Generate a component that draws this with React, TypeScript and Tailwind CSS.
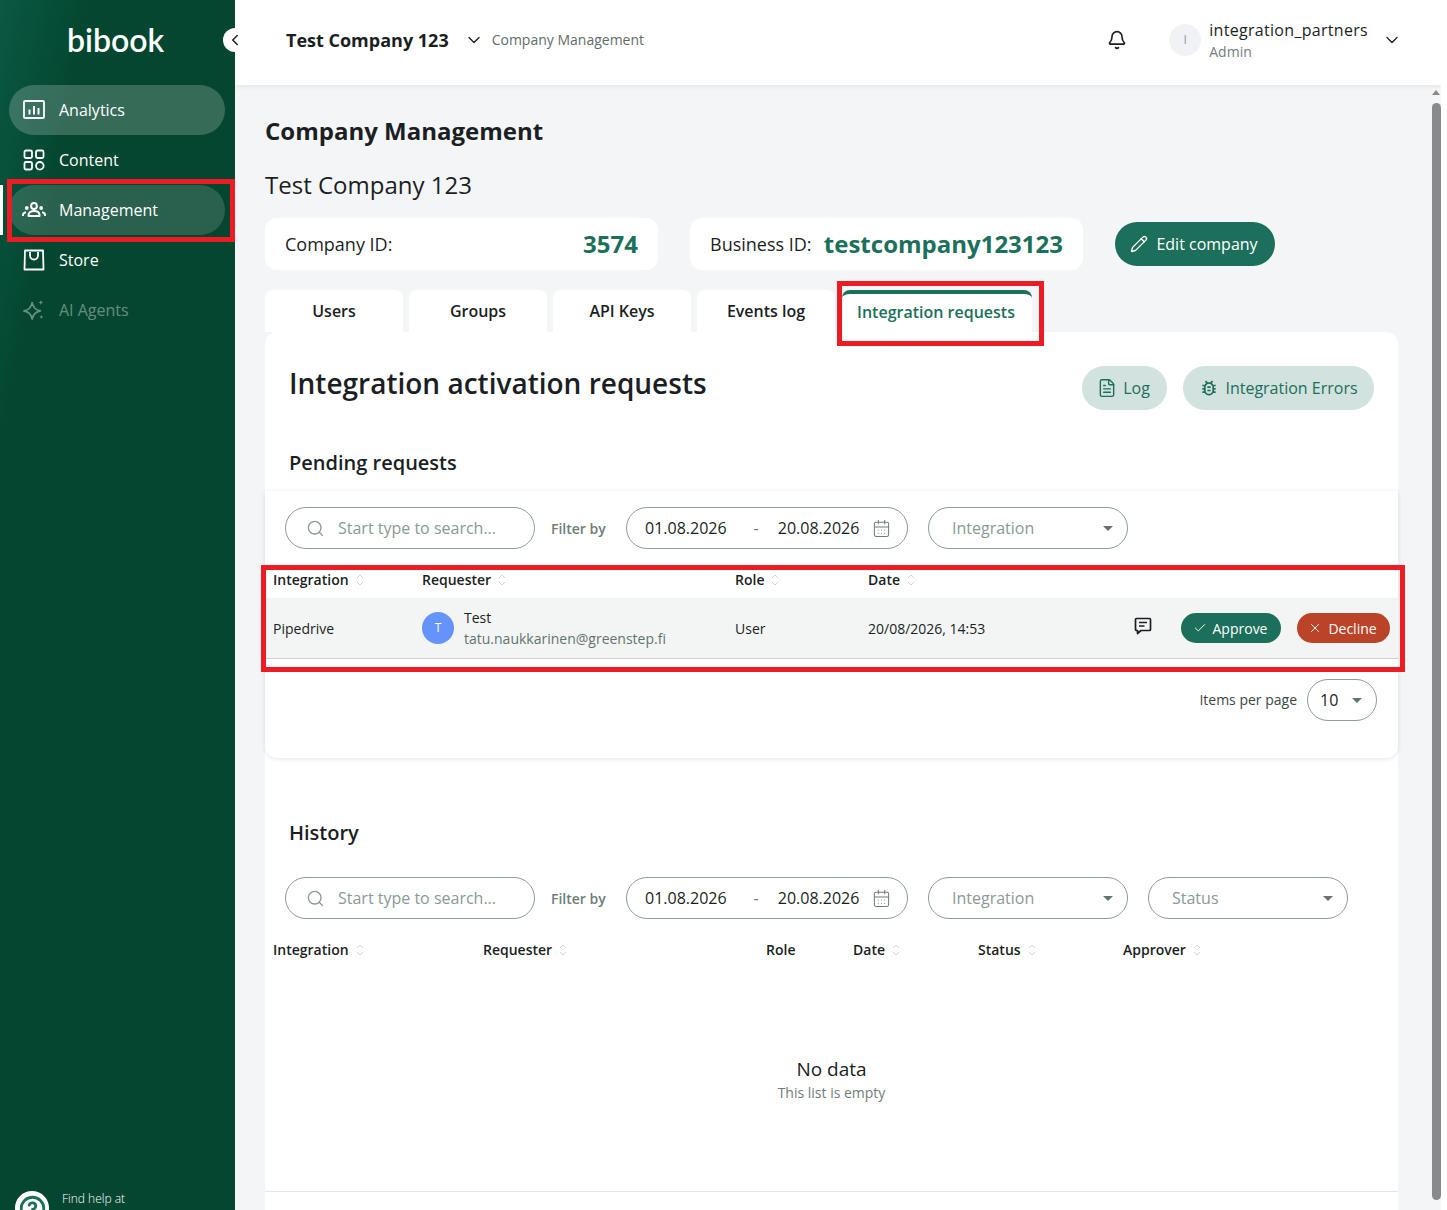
import { ReactNode } from 'react';
import { Bell, CalendarDays, Check, ChevronDown, ChevronLeft, CircleHelp, FileText, Pencil, Search, X } from 'lucide-react';
import { MdOutlineBugReport } from 'react-icons/md';

const AnalyticsIcon = () => (
    <svg width="22" height="22" viewBox="0 0 22 22" fill="none" stroke="currentColor" strokeWidth="1.8">
        <rect x="1" y="2" width="20" height="17" rx="1" />
        <path d="M6.500 10.500v5M11 7v8.500M15.500 9v6.500" strokeWidth="2" />
    </svg>
);

const ContentIcon = () => (
    <svg width="22" height="22" viewBox="0 0 22 22" fill="none" stroke="currentColor" strokeWidth="1.8">
        <rect x="1.500" y="1.500" width="7.500" height="7.500" rx="1.500" />
        <rect x="13" y="1.500" width="7.500" height="7.500" rx="1.500" />
        <rect x="1.500" y="13" width="7.500" height="7.500" rx="1.500" />
        <circle cx="16.800" cy="16.800" r="3.800" />
    </svg>
);

const GroupIcon = () => (
    <svg width="24" height="24" viewBox="0 0 24 24" fill="none" stroke="currentColor" strokeWidth="2" className="-mx-px">
        <circle cx="12" cy="8" r="2.900" />
        <circle cx="4.800" cy="10" r="1.900" fill="currentColor" stroke="none" />
        <circle cx="19.200" cy="10" r="1.900" fill="currentColor" stroke="none" />
        <path d="M6.500 18v-.8c0-2.800 2.500-4.200 5.500-4.200s5.500 1.400 5.500 4.200v.8z" strokeLinejoin="round" />
        <path d="M1 18v-1c0-1.500 1.500-2.500 3-2.700M23 18v-1c0-1.500-1.500-2.500-3-2.700" />
    </svg>
);

const StoreIcon = () => (
    <svg width="22" height="22" viewBox="0 0 22 22" fill="none" stroke="currentColor" strokeWidth="1.8">
        <path d="M2 1.500h18l.5 19h-19z" strokeLinejoin="round" />
        <path d="M7 3v3.500a4 4 0 0 0 8 0V3" />
    </svg>
);

const SparkIcon = () => (
    <svg width="24" height="24" viewBox="0 0 24 24" fill="none" stroke="currentColor" strokeWidth="1.8" strokeLinejoin="round">
        <path d="M10 4c1 5.500 3.500 8 9 9-5.500 1-8 3.500-9 9-1-5.500-3.500-8-9-9 5.500-1 8-3.500 9-9z" />
        <path d="M19.500 1c.3 1.700 1.100 2.500 2.800 2.800-1.700.3-2.500 1.100-2.800 2.800-.3-1.700-1.100-2.500-2.800-2.800 1.700-.3 2.500-1.100 2.800-2.800zM20 17.500c.3 1.300.9 1.900 2.200 2.200-1.300.3-1.900.9-2.200 2.200-.3-1.300-.9-1.900-2.200-2.200 1.300-.3 1.900-.9 2.200-2.200z" fill="currentColor" stroke="none" />
    </svg>
);

const CommentIcon = () => (
    <svg width="18" height="18" viewBox="0 0 18 18" fill="none" stroke="#1b1f23" strokeWidth="1.700" strokeLinejoin="round" className="-mt-1">
        <path d="M2.500 1.500h13a1 1 0 0 1 1 1v10a1 1 0 0 1-1 1H7L3.500 16.500v-3h-1a1 1 0 0 1-1-1v-10a1 1 0 0 1 1-1z" />
        <path d="M5 5.500h8M5 9h5.500" />
    </svg>
);

const SortIcon = () => (
    <svg width="10" height="14" viewBox="0 0 10 14" fill="none" stroke="#cfd6d4" strokeWidth="1" className="ml-1.5">
        <path d="M2 5l3-3 3 3M2 9l3 3 3-3" />
    </svg>
);

const Caret = () => <span className="ml-auto h-0 w-0 border-x-[5px] border-t-[5px] border-x-transparent border-t-[#64736f]" />;

const navItems = [
    { label: 'Analytics', icon: <AnalyticsIcon />, className: 'bg-white/20 text-white' },
    { label: 'Content', icon: <ContentIcon />, className: 'text-white' },
    { label: 'Management', icon: <GroupIcon />, className: 'bg-white/15 text-white' },
    { label: 'Store', icon: <StoreIcon />, className: 'text-white' },
    { label: 'AI Agents', icon: <SparkIcon />, className: 'text-white/40' },
];

const Sidebar = () => (
    <aside className="relative z-20 flex h-full w-[235px] shrink-0 flex-col bg-gradient-to-br from-[#0b5843] via-[#04462f] via-20% to-[#04462f] pl-[9px] text-white">
        <div className="flex h-[85px] items-center pb-[6px] pl-[58px] font-['Lato'] text-[32px] font-semibold leading-none">bibook</div>
        <nav className="flex flex-col">
            {navItems.map(item => (
                <div key={item.label} className={`flex h-[50px] w-[216px] items-center gap-[14px] rounded-full pl-[14px] text-base ${item.className}`}>
                    <span className="flex w-[22px] justify-center">{item.icon}</span>
                    {item.label}
                </div>
            ))}
        </nav>
        <span className="absolute left-0 top-[185px] h-[50px] w-[3px] bg-white" />
        <span className="absolute left-[223px] top-[28px] flex h-6 w-6 items-center justify-center rounded-full bg-white text-[#1b1f23]">
            <ChevronLeft size={18} />
        </span>
        <div className="absolute left-[15px] top-[1191px] flex h-[34px] w-[34px] items-center justify-center rounded-full bg-white">
            <CircleHelp size={27} strokeWidth={2.500} className="text-[#1c6f5a]" />
        </div>
        <span className="absolute left-[62px] top-[1191px] text-xs font-light">Find help at</span>
    </aside>
);

const Header = () => (
    <header className="relative z-10 flex h-[85px] shrink-0 items-center bg-white pb-[5px] pl-[51px] pr-[39px] shadow-[0_1px_6px_rgba(0,0,0,0.08)]">
        <span className="text-lg font-bold text-[#1b1f23]">Test Company 123</span>
        <ChevronDown size={20} className="ml-[15px] text-[#1b1f23]" strokeWidth={1.6} />
        <span className="ml-2 text-sm text-[#5f6d69]">Company Management</span>
        <Bell size={20} className="ml-auto text-[#1b1f23]" strokeWidth={2} />
        <span className="ml-[42px] flex h-8 w-8 items-center justify-center rounded-full bg-[#f0f2f6] text-xs text-[#8a9a96]">I</span>
        <div className="ml-2 flex flex-col leading-5">
            <span className="text-base font-medium tracking-[0.3px] text-[#1b1f23]">integration_partners</span>
            <span className="text-sm font-medium text-[#6f817c]">Admin</span>
        </div>
        <ChevronDown size={20} className="ml-[14px] text-[#1b1f23]" strokeWidth={1.5} />
    </header>
);

const InfoCard = ({ label, value, className }: { label: string; value: string; className: string }) => (
    <div className={`flex h-[52px] items-center justify-between rounded-xl bg-white px-5 ${className}`}>
        <span className="text-lg text-[#1b1f23]">{label}</span>
        <span className="text-2xl font-bold text-[#1c6f5a]">{value}</span>
    </div>
);

const FilterBar = ({ withStatus }: { withStatus?: boolean }) => (
    <div className="flex items-center pl-5">
        <div className="flex h-[42px] w-[250px] items-center rounded-full border border-[#8f9c98] pl-5 text-base text-[#8a9a96]">
            <Search size={19} strokeWidth={1.7} />
            <span className="ml-[13px]">Start type to search...</span>
        </div>
        <span className="ml-4 w-[55px] whitespace-nowrap pt-0.5 text-sm font-semibold text-[#6f7d79]">Filter by</span>
        <div className="ml-5 flex h-[42px] w-[282px] items-center rounded-full border border-[#8f9c98] pl-[18px] pr-4 text-base text-[#1b1f23]">
            <span>01.08.2026</span>
            <span className="ml-[27px] text-[#6f7d79]">-</span>
            <span className="ml-[19px]">20.08.2026</span>
            <CalendarDays size={19} strokeWidth={1.3} className="ml-auto text-[#6f7d79]" />
        </div>
        <div className="ml-5 flex h-[42px] w-[200px] items-center rounded-full border border-[#8f9c98] pl-[23px] pr-[14px] text-base text-[#8a9a96]">
            Integration
            <Caret />
        </div>
        {withStatus && (
            <div className="ml-5 flex h-[42px] w-[200px] items-center rounded-full border border-[#8f9c98] pl-[23px] pr-[14px] text-base text-[#8a9a96]">
                Status
                <Caret />
            </div>
        )}
    </div>
);

const Col = ({ width, sort = true, children }: { width: string; sort?: boolean; children: ReactNode }) => (
    <div className={`flex items-center text-sm font-semibold text-[#1b1f23] ${width}`}>
        {children}
        {sort && <SortIcon />}
    </div>
);

const PendingCard = () => (
    <section className="h-[267px] rounded-b-xl pt-4 shadow-[0_1px_5px_rgba(0,0,0,0.1)]">
        <FilterBar />
        <div className="mt-[14px] flex h-[35px] items-center px-2 pb-0.5">
            <Col width="w-[149px]">Integration</Col>
            <Col width="w-[313px]">Requester</Col>
            <Col width="w-[133px]">Role</Col>
            <Col width="w-[133px]">Date</Col>
        </div>
        <div className="flex h-[61px] items-center border-b border-[#cfd3d2] bg-[#f3f5f5] px-2 text-sm text-[#1b1f23]">
            <span className="w-[149px] pt-0.5">Pipedrive</span>
            <div className="flex w-[313px] items-center gap-2.5">
                <span className="flex h-8 w-8 items-center justify-center rounded-full bg-[#6494fb] text-xs text-white">T</span>
                <div className="flex flex-col leading-[21px]">
                    <span>Test</span>
                    <span className="text-[#64736f]">tatu.naukkarinen@greenstep.fi</span>
                </div>
            </div>
            <span className="w-[133px] pt-0.5">User</span>
            <span className="w-[266px] pt-0.5">20/08/2026, 14:53</span>
            <CommentIcon />
            <button className="ml-[29px] flex h-[30px] w-[100px] items-center justify-center gap-1.5 rounded-full bg-[#1c6f5a] pr-0.5 text-white">
                <Check size={14} strokeWidth={1.6} />
                <span className="pt-0.5">Approve</span>
            </button>
            <button className="ml-4 flex h-[30px] w-[93px] items-center justify-center gap-1.5 rounded-full bg-[#bb4328] pr-0.5 text-white">
                <X size={14} strokeWidth={1.6} />
                <span className="pt-0.5">Decline</span>
            </button>
        </div>
        <div className="mt-5 flex items-center justify-end pr-[21px]">
            <span className="text-sm text-[#3c4643]">Items per page</span>
            <div className="ml-[10px] flex h-[42px] w-[70px] items-center rounded-full border border-[#8f9c98] pl-3 pr-[14px] text-base text-[#1b1f23]">
                10
                <Caret />
            </div>
        </div>
    </section>
);

const HistoryCard = () => (
    <section className="flex-1 pt-4">
        <FilterBar withStatus />
        <div className="mt-[14px] flex h-[35px] items-center px-2 pb-0.5">
            <Col width="w-[210px]">Integration</Col>
            <Col width="w-[283px]">Requester</Col>
            <Col width="w-[87px]" sort={false}>Role</Col>
            <Col width="w-[125px]">Date</Col>
            <Col width="w-[145px]">Status</Col>
            <Col width="w-[140px]">Approver</Col>
        </div>
        <div className="mt-[87px] flex flex-col items-center">
            <span className="text-[19px] leading-7 text-[#1b1f23]">No data</span>
            <span className="text-sm text-[#6f7d79]">This list is empty</span>
        </div>
        <div className="mt-[88px] border-t border-[#e4e6e7]" />
    </section>
);

const Panel = () => (
    <div className="flex flex-1 flex-col rounded-t-xl bg-white">
        <div className="flex items-start justify-between pl-6 pr-6 pt-[34px]">
            <h2 className="-mt-[2px] text-[28px] font-semibold leading-[38px] text-[#1b1f23]">Integration activation requests</h2>
            <div className="flex gap-4">
                <button className="flex h-11 w-[85px] items-center justify-center gap-1.5 rounded-full bg-[#d2e2de] pr-0.5 text-base text-[#1c6f5a]">
                    <FileText size={20} strokeWidth={1.7} />
                    Log
                </button>
                <button className="flex h-11 w-[191px] items-center justify-center gap-1.5 rounded-full bg-[#d2e2de] text-base text-[#1c6f5a]">
                    <MdOutlineBugReport size={20} />
                    Integration Errors
                </button>
            </div>
        </div>
        <h3 className="mt-[38px] pl-6 text-xl font-semibold leading-[30px] text-[#1b1f23]">Pending requests</h3>
        <div className="mt-[13px]">
            <PendingCard />
        </div>
        <h3 className="mt-[60px] pl-6 text-xl font-semibold leading-[30px] text-[#1b1f23]">History</h3>
        <div className="mt-[13px] flex flex-1 flex-col">
            <HistoryCard />
        </div>
    </div>
);

const tabs = ['Users', 'Groups', 'API Keys', 'Events log'];

const App = () => (
    <div className="relative flex h-[1210px] w-[1441px] overflow-hidden bg-[#f4f5f7] font-['Open_Sans',sans-serif]">
        <Sidebar />
        <div className="flex min-w-0 flex-1 flex-col">
            <Header />
            <div className="flex min-h-0 flex-1">
                <main className="flex min-w-0 flex-1 flex-col pl-[30px] pr-[33px] pt-[28px]">
                    <h1 className="text-2xl font-bold leading-9 text-[#1b1f23]">Company Management</h1>
                    <p className="mt-[18px] text-2xl leading-9 text-[#1b1f23]">Test Company 123</p>
                    <div className="mt-[15px] flex items-center">
                        <InfoCard label="Company ID:" value="3574" className="w-[393px]" />
                        <InfoCard label="Business ID:" value="testcompany123123" className="ml-8 w-[393px]" />
                        <button className="ml-8 flex h-11 w-40 items-center justify-center gap-2 rounded-full bg-[#1c6f5a] pr-0.5 text-base text-white">
                            <Pencil size={18} strokeWidth={1.8} />
                            Edit company
                        </button>
                    </div>
                    <div className="mt-5 flex">
                        {tabs.map(tab => (
                            <div key={tab} className="mr-[6px] flex h-[42px] w-[138px] items-center justify-center rounded-t-lg bg-white text-base font-semibold text-[#1b1f23]">
                                {tab}
                            </div>
                        ))}
                        <div className="ml-px flex h-[42px] w-[190px] items-center justify-center rounded-t-lg border-t-4 border-[#1c6f5a] bg-white pb-[3px] pr-0.5 text-base font-semibold text-[#1c6f5a]">
                            Integration requests
                        </div>
                    </div>
                    <Panel />
                </main>
                <div className="flex w-[10px] shrink-0 flex-col items-center bg-[#f5f5f5] pt-[5px]">
                    <span className="h-0 w-0 border-x-[4px] border-b-[5px] border-x-transparent border-b-[#8a8a8a]" />
                    <span className="mt-2 h-[1097px] w-[9px] rounded-full bg-[#8a8a8a]" />
                </div>
            </div>
        </div>
        <div className="absolute left-[7px] top-[179px] z-30 h-[63px] w-[228px] border-[5px] border-[#ed1c24]" />
        <div className="absolute left-[837px] top-[281px] z-30 h-[65px] w-[207px] border-[5px] border-[#ed1c24]" />
        <div className="absolute left-[261px] top-[565px] z-30 h-[107px] w-[1144px] border-[5px] border-[#ed1c24]" />
    </div>
);

export default App;
